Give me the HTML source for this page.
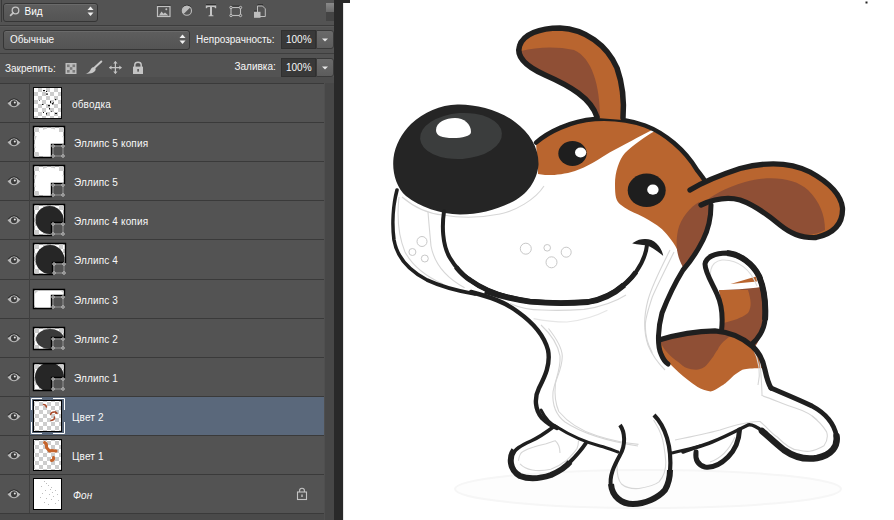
<!DOCTYPE html>
<html><head><meta charset="utf-8">
<style>
*{margin:0;padding:0;box-sizing:border-box}
html,body{width:894px;height:520px;overflow:hidden;background:#fff;font-family:"Liberation Sans",sans-serif}
#panel{position:absolute;left:0;top:0;width:334px;height:520px;background:#535353}
#strip{position:absolute;left:334px;top:0;width:9px;height:520px;background:#292929}
#canvas{position:absolute;left:343px;top:0;width:551px;height:520px;background:#fff}
.abs{position:absolute}
.txt{position:absolute;font-size:10px;color:#f8f8f8;white-space:nowrap;line-height:12px}
.dd{position:absolute;border-radius:3px;background:linear-gradient(#5e5e5e,#545454);border:1px solid #353535;box-shadow:inset 0 1px 0 #6a6a6a}
.inp{position:absolute;background:#393939;border:1px solid #303030}
.btn{position:absolute;background:linear-gradient(#6a6a6a,#5c5c5c);border:1px solid #3a3a3a;border-radius:0 3px 3px 0}
.thumb{position:absolute;border:1px solid #0a0a0a;background-color:#fff;
 background-image:linear-gradient(45deg,#cdcdcd 25%,transparent 25%,transparent 75%,#cdcdcd 75%),linear-gradient(45deg,#cdcdcd 25%,transparent 25%,transparent 75%,#cdcdcd 75%);
 background-size:8px 8px;background-position:0 0,4px 4px}

</style></head><body>
<div id="panel">
<div class="abs" style="left:0;top:83px;width:324px;height:39px;background:#535353;border-top:1px solid #3a3a3a"></div>
<div class="abs" style="left:29px;top:83px;width:1px;height:39px;background:#3f3f3f"></div>
<svg class="abs" style="left:6px;top:96px" width="16" height="14" viewBox="0 0 16 14">
<path d="M1.6 7.2 Q8 -1.2 14.4 7.2 Q8 15.4 1.6 7.2Z" fill="#b8b8b8"/>
<path d="M2.2 6.2 Q8 -0.6 13.8 6.2" fill="none" stroke="#2a2a2a" stroke-width="1.1"/>
<circle cx="8" cy="7.3" r="3" fill="#3a3a3a"/><circle cx="8.8" cy="6.4" r="1" fill="#e8e8e8"/></svg>
<div class="txt" style="left:72px;top:99px;letter-spacing:0.15px;">обводка</div>
<div class="abs" style="left:0;top:122px;width:324px;height:39px;background:#535353;border-top:1px solid #3a3a3a"></div>
<div class="abs" style="left:29px;top:122px;width:1px;height:39px;background:#3f3f3f"></div>
<svg class="abs" style="left:6px;top:135px" width="16" height="14" viewBox="0 0 16 14">
<path d="M1.6 7.2 Q8 -1.2 14.4 7.2 Q8 15.4 1.6 7.2Z" fill="#b8b8b8"/>
<path d="M2.2 6.2 Q8 -0.6 13.8 6.2" fill="none" stroke="#2a2a2a" stroke-width="1.1"/>
<circle cx="8" cy="7.3" r="3" fill="#3a3a3a"/><circle cx="8.8" cy="6.4" r="1" fill="#e8e8e8"/></svg>
<div class="txt" style="left:74px;top:138px;letter-spacing:0.15px;">Эллипс 5 копия</div>
<div class="abs" style="left:0;top:161px;width:324px;height:39px;background:#535353;border-top:1px solid #3a3a3a"></div>
<div class="abs" style="left:29px;top:161px;width:1px;height:39px;background:#3f3f3f"></div>
<svg class="abs" style="left:6px;top:174px" width="16" height="14" viewBox="0 0 16 14">
<path d="M1.6 7.2 Q8 -1.2 14.4 7.2 Q8 15.4 1.6 7.2Z" fill="#b8b8b8"/>
<path d="M2.2 6.2 Q8 -0.6 13.8 6.2" fill="none" stroke="#2a2a2a" stroke-width="1.1"/>
<circle cx="8" cy="7.3" r="3" fill="#3a3a3a"/><circle cx="8.8" cy="6.4" r="1" fill="#e8e8e8"/></svg>
<div class="txt" style="left:74px;top:177px;letter-spacing:0.15px;">Эллипс 5</div>
<div class="abs" style="left:0;top:200px;width:324px;height:39px;background:#535353;border-top:1px solid #3a3a3a"></div>
<div class="abs" style="left:29px;top:200px;width:1px;height:39px;background:#3f3f3f"></div>
<svg class="abs" style="left:6px;top:213px" width="16" height="14" viewBox="0 0 16 14">
<path d="M1.6 7.2 Q8 -1.2 14.4 7.2 Q8 15.4 1.6 7.2Z" fill="#b8b8b8"/>
<path d="M2.2 6.2 Q8 -0.6 13.8 6.2" fill="none" stroke="#2a2a2a" stroke-width="1.1"/>
<circle cx="8" cy="7.3" r="3" fill="#3a3a3a"/><circle cx="8.8" cy="6.4" r="1" fill="#e8e8e8"/></svg>
<div class="txt" style="left:74px;top:216px;letter-spacing:0.15px;">Эллипс 4 копия</div>
<div class="abs" style="left:0;top:239px;width:324px;height:40px;background:#535353;border-top:1px solid #3a3a3a"></div>
<div class="abs" style="left:29px;top:239px;width:1px;height:40px;background:#3f3f3f"></div>
<svg class="abs" style="left:6px;top:253px" width="16" height="14" viewBox="0 0 16 14">
<path d="M1.6 7.2 Q8 -1.2 14.4 7.2 Q8 15.4 1.6 7.2Z" fill="#b8b8b8"/>
<path d="M2.2 6.2 Q8 -0.6 13.8 6.2" fill="none" stroke="#2a2a2a" stroke-width="1.1"/>
<circle cx="8" cy="7.3" r="3" fill="#3a3a3a"/><circle cx="8.8" cy="6.4" r="1" fill="#e8e8e8"/></svg>
<div class="txt" style="left:74px;top:255px;letter-spacing:0.15px;">Эллипс 4</div>
<div class="abs" style="left:0;top:279px;width:324px;height:39px;background:#535353;border-top:1px solid #3a3a3a"></div>
<div class="abs" style="left:29px;top:279px;width:1px;height:39px;background:#3f3f3f"></div>
<svg class="abs" style="left:6px;top:292px" width="16" height="14" viewBox="0 0 16 14">
<path d="M1.6 7.2 Q8 -1.2 14.4 7.2 Q8 15.4 1.6 7.2Z" fill="#b8b8b8"/>
<path d="M2.2 6.2 Q8 -0.6 13.8 6.2" fill="none" stroke="#2a2a2a" stroke-width="1.1"/>
<circle cx="8" cy="7.3" r="3" fill="#3a3a3a"/><circle cx="8.8" cy="6.4" r="1" fill="#e8e8e8"/></svg>
<div class="txt" style="left:74px;top:295px;letter-spacing:0.15px;">Эллипс 3</div>
<div class="abs" style="left:0;top:318px;width:324px;height:39px;background:#535353;border-top:1px solid #3a3a3a"></div>
<div class="abs" style="left:29px;top:318px;width:1px;height:39px;background:#3f3f3f"></div>
<svg class="abs" style="left:6px;top:331px" width="16" height="14" viewBox="0 0 16 14">
<path d="M1.6 7.2 Q8 -1.2 14.4 7.2 Q8 15.4 1.6 7.2Z" fill="#b8b8b8"/>
<path d="M2.2 6.2 Q8 -0.6 13.8 6.2" fill="none" stroke="#2a2a2a" stroke-width="1.1"/>
<circle cx="8" cy="7.3" r="3" fill="#3a3a3a"/><circle cx="8.8" cy="6.4" r="1" fill="#e8e8e8"/></svg>
<div class="txt" style="left:74px;top:334px;letter-spacing:0.15px;">Эллипс 2</div>
<div class="abs" style="left:0;top:357px;width:324px;height:39px;background:#535353;border-top:1px solid #3a3a3a"></div>
<div class="abs" style="left:29px;top:357px;width:1px;height:39px;background:#3f3f3f"></div>
<svg class="abs" style="left:6px;top:370px" width="16" height="14" viewBox="0 0 16 14">
<path d="M1.6 7.2 Q8 -1.2 14.4 7.2 Q8 15.4 1.6 7.2Z" fill="#b8b8b8"/>
<path d="M2.2 6.2 Q8 -0.6 13.8 6.2" fill="none" stroke="#2a2a2a" stroke-width="1.1"/>
<circle cx="8" cy="7.3" r="3" fill="#3a3a3a"/><circle cx="8.8" cy="6.4" r="1" fill="#e8e8e8"/></svg>
<div class="txt" style="left:74px;top:373px;letter-spacing:0.15px;">Эллипс 1</div>
<div class="abs" style="left:0;top:396px;width:324px;height:39px;background:#535353;border-top:1px solid #3a3a3a"></div>
<div class="abs" style="left:30px;top:397px;width:294px;height:38px;background:#5a687b"></div>
<div class="abs" style="left:29px;top:396px;width:1px;height:39px;background:#3f3f3f"></div>
<svg class="abs" style="left:6px;top:409px" width="16" height="14" viewBox="0 0 16 14">
<path d="M1.6 7.2 Q8 -1.2 14.4 7.2 Q8 15.4 1.6 7.2Z" fill="#b8b8b8"/>
<path d="M2.2 6.2 Q8 -0.6 13.8 6.2" fill="none" stroke="#2a2a2a" stroke-width="1.1"/>
<circle cx="8" cy="7.3" r="3" fill="#3a3a3a"/><circle cx="8.8" cy="6.4" r="1" fill="#e8e8e8"/></svg>
<div class="txt" style="left:72px;top:412px;letter-spacing:0.15px;">Цвет 2</div>
<div class="abs" style="left:0;top:435px;width:324px;height:39px;background:#535353;border-top:1px solid #3a3a3a"></div>
<div class="abs" style="left:29px;top:435px;width:1px;height:39px;background:#3f3f3f"></div>
<svg class="abs" style="left:6px;top:448px" width="16" height="14" viewBox="0 0 16 14">
<path d="M1.6 7.2 Q8 -1.2 14.4 7.2 Q8 15.4 1.6 7.2Z" fill="#b8b8b8"/>
<path d="M2.2 6.2 Q8 -0.6 13.8 6.2" fill="none" stroke="#2a2a2a" stroke-width="1.1"/>
<circle cx="8" cy="7.3" r="3" fill="#3a3a3a"/><circle cx="8.8" cy="6.4" r="1" fill="#e8e8e8"/></svg>
<div class="txt" style="left:72px;top:451px;letter-spacing:0.15px;">Цвет 1</div>
<div class="abs" style="left:0;top:474px;width:324px;height:39px;background:#535353;border-top:1px solid #3a3a3a"></div>
<div class="abs" style="left:29px;top:474px;width:1px;height:39px;background:#3f3f3f"></div>
<svg class="abs" style="left:6px;top:487px" width="16" height="14" viewBox="0 0 16 14">
<path d="M1.6 7.2 Q8 -1.2 14.4 7.2 Q8 15.4 1.6 7.2Z" fill="#b8b8b8"/>
<path d="M2.2 6.2 Q8 -0.6 13.8 6.2" fill="none" stroke="#2a2a2a" stroke-width="1.1"/>
<circle cx="8" cy="7.3" r="3" fill="#3a3a3a"/><circle cx="8.8" cy="6.4" r="1" fill="#e8e8e8"/></svg>
<div class="txt" style="left:73px;top:490px;letter-spacing:0.15px;font-style:italic;">Фон</div>
<div class="abs" style="left:0;top:513px;width:324px;height:1px;background:#3a3a3a"></div>
<div class="thumb" style="left:33px;top:87px;width:29px;height:32px"></div>
<svg class="abs" style="left:31px;top:124px" width="36" height="38" viewBox="0 0 36 38"><defs><pattern id="ck1" width="8" height="8" patternUnits="userSpaceOnUse"><rect width="8" height="8" fill="#fff"/><rect width="4" height="4" fill="#cdcdcd"/><rect x="4" y="4" width="4" height="4" fill="#cdcdcd"/></pattern><clipPath id="cl1"><path d="M2.5,2.5 L33.5,2.5 L33.5,20.5 L20.5,20.5 L20.5,33.5 L2.5,33.5 Z"/></clipPath></defs><g clip-path="url(#cl1)"><rect width="36" height="36" fill="url(#ck1)"/><ellipse cx="18.5" cy="19" rx="14.5" ry="14.5" fill="#fff"/></g><path d="M2.5,2.5 L33.5,2.5 L33.5,20.5 L20.5,20.5 L20.5,33.5 L2.5,33.5 Z" fill="none" stroke="#000" stroke-width="1.4"/><rect x="22" y="22" width="10" height="10" fill="none" stroke="#9c9c9c" stroke-width="0.9"/><circle cx="22" cy="22" r="1.25" fill="#4a4a4a" stroke="#d4d4d4" stroke-width="0.9"/><circle cx="32" cy="22" r="1.25" fill="#4a4a4a" stroke="#d4d4d4" stroke-width="0.9"/><circle cx="22" cy="32" r="1.25" fill="#4a4a4a" stroke="#d4d4d4" stroke-width="0.9"/><circle cx="32" cy="32" r="1.25" fill="#4a4a4a" stroke="#d4d4d4" stroke-width="0.9"/></svg>
<svg class="abs" style="left:31px;top:163px" width="36" height="38" viewBox="0 0 36 38"><defs><pattern id="ck2" width="8" height="8" patternUnits="userSpaceOnUse"><rect width="8" height="8" fill="#fff"/><rect width="4" height="4" fill="#cdcdcd"/><rect x="4" y="4" width="4" height="4" fill="#cdcdcd"/></pattern><clipPath id="cl2"><path d="M2.5,2.5 L33.5,2.5 L33.5,20.5 L20.5,20.5 L20.5,33.5 L2.5,33.5 Z"/></clipPath></defs><g clip-path="url(#cl2)"><rect width="36" height="36" fill="url(#ck2)"/><ellipse cx="18.5" cy="19" rx="14.5" ry="14.5" fill="#fff"/></g><path d="M2.5,2.5 L33.5,2.5 L33.5,20.5 L20.5,20.5 L20.5,33.5 L2.5,33.5 Z" fill="none" stroke="#000" stroke-width="1.4"/><rect x="22" y="22" width="10" height="10" fill="none" stroke="#9c9c9c" stroke-width="0.9"/><circle cx="22" cy="22" r="1.25" fill="#4a4a4a" stroke="#d4d4d4" stroke-width="0.9"/><circle cx="32" cy="22" r="1.25" fill="#4a4a4a" stroke="#d4d4d4" stroke-width="0.9"/><circle cx="22" cy="32" r="1.25" fill="#4a4a4a" stroke="#d4d4d4" stroke-width="0.9"/><circle cx="32" cy="32" r="1.25" fill="#4a4a4a" stroke="#d4d4d4" stroke-width="0.9"/></svg>
<svg class="abs" style="left:31px;top:202px" width="36" height="38" viewBox="0 0 36 38"><defs><pattern id="ck3" width="8" height="8" patternUnits="userSpaceOnUse"><rect width="8" height="8" fill="#fff"/><rect width="4" height="4" fill="#cdcdcd"/><rect x="4" y="4" width="4" height="4" fill="#cdcdcd"/></pattern><clipPath id="cl3"><path d="M2.5,2.5 L33.5,2.5 L33.5,20.5 L20.5,20.5 L20.5,33.5 L2.5,33.5 Z"/></clipPath></defs><g clip-path="url(#cl3)"><rect width="36" height="36" fill="url(#ck3)"/><ellipse cx="18.5" cy="18" rx="14" ry="14" fill="#262626"/></g><path d="M2.5,2.5 L33.5,2.5 L33.5,20.5 L20.5,20.5 L20.5,33.5 L2.5,33.5 Z" fill="none" stroke="#000" stroke-width="1.4"/><rect x="22" y="22" width="10" height="10" fill="none" stroke="#9c9c9c" stroke-width="0.9"/><circle cx="22" cy="22" r="1.25" fill="#4a4a4a" stroke="#d4d4d4" stroke-width="0.9"/><circle cx="32" cy="22" r="1.25" fill="#4a4a4a" stroke="#d4d4d4" stroke-width="0.9"/><circle cx="22" cy="32" r="1.25" fill="#4a4a4a" stroke="#d4d4d4" stroke-width="0.9"/><circle cx="32" cy="32" r="1.25" fill="#4a4a4a" stroke="#d4d4d4" stroke-width="0.9"/></svg>
<svg class="abs" style="left:31px;top:241px" width="37" height="38" viewBox="0 0 37 38"><defs><pattern id="ck4" width="8" height="8" patternUnits="userSpaceOnUse"><rect width="8" height="8" fill="#fff"/><rect width="4" height="4" fill="#cdcdcd"/><rect x="4" y="4" width="4" height="4" fill="#cdcdcd"/></pattern><clipPath id="cl4"><path d="M2.5,2.5 L34.5,2.5 L34.5,21.5 L21.5,21.5 L21.5,33.5 L2.5,33.5 Z"/></clipPath></defs><g clip-path="url(#cl4)"><rect width="37" height="36" fill="url(#ck4)"/><ellipse cx="19" cy="18.5" rx="14.5" ry="14.5" fill="#262626"/></g><path d="M2.5,2.5 L34.5,2.5 L34.5,21.5 L21.5,21.5 L21.5,33.5 L2.5,33.5 Z" fill="none" stroke="#000" stroke-width="1.4"/><rect x="23" y="23" width="10" height="9" fill="none" stroke="#9c9c9c" stroke-width="0.9"/><circle cx="23" cy="23" r="1.25" fill="#4a4a4a" stroke="#d4d4d4" stroke-width="0.9"/><circle cx="33" cy="23" r="1.25" fill="#4a4a4a" stroke="#d4d4d4" stroke-width="0.9"/><circle cx="23" cy="32" r="1.25" fill="#4a4a4a" stroke="#d4d4d4" stroke-width="0.9"/><circle cx="33" cy="32" r="1.25" fill="#4a4a4a" stroke="#d4d4d4" stroke-width="0.9"/></svg>
<svg class="abs" style="left:31px;top:287px" width="36" height="26" viewBox="0 0 36 26"><defs><pattern id="ck5" width="8" height="8" patternUnits="userSpaceOnUse"><rect width="8" height="8" fill="#fff"/><rect width="4" height="4" fill="#cdcdcd"/><rect x="4" y="4" width="4" height="4" fill="#cdcdcd"/></pattern><clipPath id="cl5"><path d="M2.5,2.5 L33.5,2.5 L33.5,8.5 L20.5,8.5 L20.5,21.5 L2.5,21.5 Z"/></clipPath></defs><g clip-path="url(#cl5)"><rect width="36" height="24" fill="url(#ck5)"/><ellipse cx="18.5" cy="13" rx="17" ry="12" fill="#fff"/></g><path d="M2.5,2.5 L33.5,2.5 L33.5,8.5 L20.5,8.5 L20.5,21.5 L2.5,21.5 Z" fill="none" stroke="#000" stroke-width="1.4"/><rect x="22" y="10" width="10" height="10" fill="none" stroke="#9c9c9c" stroke-width="0.9"/><circle cx="22" cy="10" r="1.25" fill="#4a4a4a" stroke="#d4d4d4" stroke-width="0.9"/><circle cx="32" cy="10" r="1.25" fill="#4a4a4a" stroke="#d4d4d4" stroke-width="0.9"/><circle cx="22" cy="20" r="1.25" fill="#4a4a4a" stroke="#d4d4d4" stroke-width="0.9"/><circle cx="32" cy="20" r="1.25" fill="#4a4a4a" stroke="#d4d4d4" stroke-width="0.9"/></svg>
<svg class="abs" style="left:31px;top:325px" width="36" height="29" viewBox="0 0 36 29"><defs><pattern id="ck6" width="8" height="8" patternUnits="userSpaceOnUse"><rect width="8" height="8" fill="#fff"/><rect width="4" height="4" fill="#cdcdcd"/><rect x="4" y="4" width="4" height="4" fill="#cdcdcd"/></pattern><clipPath id="cl6"><path d="M2.5,2.5 L33.5,2.5 L33.5,12.5 L20.5,12.5 L20.5,24.5 L2.5,24.5 Z"/></clipPath></defs><g clip-path="url(#cl6)"><rect width="36" height="27" fill="url(#ck6)"/><ellipse cx="19" cy="14" rx="14" ry="10" fill="#3a3a3a"/></g><path d="M2.5,2.5 L33.5,2.5 L33.5,12.5 L20.5,12.5 L20.5,24.5 L2.5,24.5 Z" fill="none" stroke="#000" stroke-width="1.4"/><rect x="22" y="14" width="10" height="9" fill="none" stroke="#9c9c9c" stroke-width="0.9"/><circle cx="22" cy="14" r="1.25" fill="#4a4a4a" stroke="#d4d4d4" stroke-width="0.9"/><circle cx="32" cy="14" r="1.25" fill="#4a4a4a" stroke="#d4d4d4" stroke-width="0.9"/><circle cx="22" cy="23" r="1.25" fill="#4a4a4a" stroke="#d4d4d4" stroke-width="0.9"/><circle cx="32" cy="23" r="1.25" fill="#4a4a4a" stroke="#d4d4d4" stroke-width="0.9"/></svg>
<svg class="abs" style="left:31px;top:361px" width="36" height="34" viewBox="0 0 36 34"><defs><pattern id="ck7" width="8" height="8" patternUnits="userSpaceOnUse"><rect width="8" height="8" fill="#fff"/><rect width="4" height="4" fill="#cdcdcd"/><rect x="4" y="4" width="4" height="4" fill="#cdcdcd"/></pattern><clipPath id="cl7"><path d="M2.5,2.5 L33.5,2.5 L33.5,16.5 L20.5,16.5 L20.5,29.5 L2.5,29.5 Z"/></clipPath></defs><g clip-path="url(#cl7)"><rect width="36" height="32" fill="url(#ck7)"/><ellipse cx="18.5" cy="16" rx="14.5" ry="14.5" fill="#262626"/></g><path d="M2.5,2.5 L33.5,2.5 L33.5,16.5 L20.5,16.5 L20.5,29.5 L2.5,29.5 Z" fill="none" stroke="#000" stroke-width="1.4"/><rect x="22" y="18" width="10" height="10" fill="none" stroke="#9c9c9c" stroke-width="0.9"/><circle cx="22" cy="18" r="1.25" fill="#4a4a4a" stroke="#d4d4d4" stroke-width="0.9"/><circle cx="32" cy="18" r="1.25" fill="#4a4a4a" stroke="#d4d4d4" stroke-width="0.9"/><circle cx="22" cy="28" r="1.25" fill="#4a4a4a" stroke="#d4d4d4" stroke-width="0.9"/><circle cx="32" cy="28" r="1.25" fill="#4a4a4a" stroke="#d4d4d4" stroke-width="0.9"/></svg>
<svg class="abs" style="left:33px;top:87px" width="29" height="32" viewBox="33 87 29 32" fill="#111"><rect x="43" y="90" width="2" height="1.2"/><rect x="46" y="91" width="1" height="1"/><rect x="46" y="93.5" width="2" height="1.2"/><rect x="55" y="99" width="1.2" height="1.2"/><rect x="50" y="101" width="1" height="2"/><rect x="52" y="103" width="1.5" height="1.5"/><rect x="48" y="105" width="2" height="1.2"/><rect x="42" y="104" width="1.5" height="1"/><rect x="49" y="108" width="1" height="1.5"/><rect x="43" y="112" width="1" height="1"/><rect x="46" y="113" width="1" height="1.5"/><rect x="55" y="113" width="2" height="1"/><rect x="53" y="102" width="1" height="1" fill="#555"/><rect x="39" y="100" width="1" height="1" fill="#777"/><rect x="51" y="111" width="1" height="1" fill="#555"/></svg>
<div class="thumb" style="left:33px;top:400px;width:29px;height:32px;border-width:1.5px;border-color:#000;background-position:1px 1px,5px 5px"></div>
<svg class="abs" style="left:30px;top:397px" width="36" height="39" viewBox="30 397 36 39"><path d="M31.5 410 V398.5 H42 M53 398.5 H64.5 V410 M64.5 422 V433.5 H53 M42 433.5 H31.5 V422" fill="none" stroke="#fff" stroke-width="1"/><g fill="none" stroke="#a8492a" stroke-width="1.5" stroke-linecap="round"><path d="M43.5 404.5 Q46 404.5 46.5 407"/><path d="M50.5 414.5 Q51.5 411.5 55 412 L57 413.5"/><path d="M54.5 417 Q55 420 51 420.5"/></g><path d="M55 411 L57.5 412.5 L55.5 414Z" fill="#a8492a"/></svg>
<div class="thumb" style="left:33px;top:439px;width:29px;height:32px;border-width:1.5px;border-color:#000;background-position:1px 1px,5px 5px"></div>
<svg class="abs" style="left:33px;top:439px" width="29" height="32" viewBox="33 439 29 32"><g fill="none" stroke="#c5642c" stroke-width="3" stroke-linecap="round" stroke-linejoin="round"><path d="M44.5 442.5 Q47 443.5 46.5 447.5 L49.5 451 L52 450.5 L56 451"/><path d="M53.5 457.5 Q54 460 51.5 460.5"/></g></svg>
<div class="abs" style="left:33px;top:478px;width:29px;height:32px;border:1.5px solid #000;background:#fff"></div>
<svg class="abs" style="left:34px;top:479px" width="27" height="30" viewBox="34 479 27 30" fill="#9a9a9a"><rect x="44" y="481" width="0.8" height="0.8"/><rect x="46" y="483" width="0.8" height="0.8"/><rect x="41" y="486" width="0.8" height="0.8"/><rect x="48" y="485" width="0.8" height="0.8"/><rect x="51" y="487" width="0.8" height="0.8"/><rect x="55" y="490" width="0.8" height="0.8"/><rect x="45" y="490" width="0.8" height="0.8"/><rect x="42" y="493" width="0.8" height="0.8"/><rect x="49" y="494" width="0.8" height="0.8"/><rect x="53" y="496" width="0.8" height="0.8"/><rect x="57" y="494" width="0.8" height="0.8"/><rect x="46" y="498" width="0.8" height="0.8"/><rect x="51" y="499" width="0.8" height="0.8"/><rect x="44" y="502" width="0.8" height="0.8"/><rect x="48" y="504" width="0.8" height="0.8"/><rect x="55" y="503" width="0.8" height="0.8"/><rect x="52" y="492" width="0.8" height="0.8"/><rect x="40" y="497" width="0.8" height="0.8"/><rect x="58" y="500" width="0.8" height="0.8"/><rect x="50" y="489" width="0.8" height="0.8"/></svg>
<svg class="abs" style="left:294px;top:484px" width="16" height="18" viewBox="0 0 16 18"><path d="M5.6 8 V6.6 Q5.6 4.3 8 4.3 Q10.4 4.3 10.4 6.6 V8" fill="none" stroke="#c4c4c4" stroke-width="1.1"/><rect x="3.5" y="8" width="9" height="7.5" fill="none" stroke="#c4c4c4" stroke-width="1.1"/><rect x="7.3" y="10.5" width="1.4" height="2.5" fill="#c4c4c4"/></svg>
  <div class="abs" style="left:1px;top:0;width:1px;height:22px;background:#3a3a3a"></div>
  <div class="dd" style="left:3px;top:3px;width:95px;height:19px"></div>
  <svg class="abs" style="left:8px;top:4px" width="14" height="15" viewBox="0 0 14 15"><circle cx="7.5" cy="6.5" r="3.3" fill="none" stroke="#c4c4c4" stroke-width="1.3"/><line x1="5.2" y1="8.8" x2="2.6" y2="11.4" stroke="#c4c4c4" stroke-width="1.8" stroke-linecap="round"/></svg>
  <div class="txt" style="left:24.5px;top:5.5px;font-size:10px;color:#fff">Вид</div>
  <svg class="abs" style="left:86px;top:5px" width="10" height="14" viewBox="0 0 10 14"><path d="M4.5 1.5 L7.5 5 L1.5 5Z" fill="#f0f0f0"/><path d="M1.5 7.5 L7.5 7.5 L4.5 11Z" fill="#f0f0f0"/></svg>
  <!-- header icons -->
  <svg class="abs" style="left:150px;top:0" width="130" height="24" viewBox="150 0 130 24">
    <g stroke="#2e2e2e" stroke-width="1" fill="none"><path d="M157 5.3 H170.5"/><path d="M183 7.2 A5 5 0 0 1 191 7.2"/><path d="M206 4.6 H216"/><path d="M231 6.1 H240.5"/><path d="M257.5 4.7 H263"/><path d="M254 11 H257"/></g>
    <rect x="157.5" y="6.5" width="12.5" height="10" fill="none" stroke="#c0c0c0" stroke-width="1.2"/>
    <path d="M159 15.5 L161.5 11.5 L163.5 13.8 L165 12.5 L168.5 15.5Z" fill="#c0c0c0"/>
    <circle cx="166.3" cy="9.3" r="1" fill="#c0c0c0"/>
    <circle cx="186.9" cy="10.7" r="4.6" fill="#555" stroke="#bdbdbd" stroke-width="1.1"/>
    <path d="M183.6 14 A4.6 4.6 0 0 1 190.2 7.4Z" fill="#bdbdbd"/>
    <path d="M205.8 5.5 H216.2 V8.2 H215.3 Q214.8 6.9 213.2 6.9 H212 V14.6 Q212 15.4 213.5 15.5 V16.2 H208.5 V15.5 Q210 15.4 210 14.6 V6.9 H208.8 Q207.2 6.9 206.7 8.2 H205.8Z" fill="#c4c4c4"/>
    <rect x="231" y="7.5" width="9.5" height="8" fill="none" stroke="#bdbdbd" stroke-width="1.1"/>
    <circle cx="231" cy="7.5" r="1.2" fill="#555" stroke="#c8c8c8" stroke-width="0.9"/>
    <circle cx="240.5" cy="7.5" r="1.2" fill="#555" stroke="#c8c8c8" stroke-width="0.9"/>
    <circle cx="231" cy="15.5" r="1.2" fill="#555" stroke="#c8c8c8" stroke-width="0.9"/>
    <circle cx="240.5" cy="15.5" r="1.2" fill="#555" stroke="#c8c8c8" stroke-width="0.9"/>
    <path d="M257.5 6 H262.5 L265.3 8.8 V16.5 H257.5Z" fill="none" stroke="#bdbdbd" stroke-width="1"/>
    <rect x="254" y="11.8" width="6.5" height="6" fill="#bdbdbd"/>
  </svg>
  <div class="abs" style="left:326px;top:3px;width:8px;height:9px;background:linear-gradient(#8a8a8a,#6a6a6a)"></div>
  <div class="abs" style="left:326px;top:12px;width:8px;height:9px;background:#444"></div>
  <div class="abs" style="left:0;top:25px;width:334px;height:1px;background:#3c3c3c"></div><div class="abs" style="left:0;top:26px;width:334px;height:1px;background:#5a5a5a"></div>
  <div class="dd" style="left:3px;top:30px;width:187px;height:20px"></div>
  <div class="txt" style="left:10px;top:34px">Обычные</div>
  <svg class="abs" style="left:178px;top:33px" width="10" height="14" viewBox="0 0 10 14"><path d="M4.5 1.5 L7.5 5 L1.5 5Z" fill="#f0f0f0"/><path d="M1.5 7.5 L7.5 7.5 L4.5 11Z" fill="#f0f0f0"/></svg>
  <div class="txt" style="left:196px;top:34px">Непрозрачность:</div>
  <div class="inp" style="left:281px;top:30px;width:35px;height:19px"></div>
  <div class="txt" style="left:286px;top:34px">100%</div>
  <div class="btn" style="left:316px;top:30px;width:18px;height:19px"></div>
  <svg class="abs" style="left:320px;top:36px" width="10" height="8" viewBox="0 0 10 8"><path d="M2 2.5 H8 L5 5.5Z" fill="#e8e8e8"/></svg>
  <div class="abs" style="left:0;top:53px;width:334px;height:1px;background:#3e3e3e"></div>
  <div class="txt" style="left:5px;top:63px">Закрепить:</div>
  <svg class="abs" style="left:60px;top:58px" width="90" height="22" viewBox="60 58 90 22">
    <rect x="65.5" y="63" width="11" height="11" fill="#bdbdbd"/>
    <rect x="67" y="64.5" width="2.6" height="2.6" fill="#7a7a7a"/><rect x="72.5" y="64.5" width="2.6" height="2.6" fill="#7a7a7a"/>
    <rect x="69.8" y="67.2" width="2.6" height="2.6" fill="#7a7a7a"/>
    <rect x="67" y="70" width="2.6" height="2.6" fill="#7a7a7a"/><rect x="72.5" y="70" width="2.6" height="2.6" fill="#7a7a7a"/>
    <line x1="94.5" y1="67.8" x2="101.3" y2="61.5" stroke="#c8c8c8" stroke-width="2" stroke-linecap="round"/>
    <path d="M85.5 73.6 C88.5 73.4 90 71.2 91 69 C92 66.8 94.6 66.6 95.6 68.8 C96.2 71.4 92.5 74.4 85.5 73.6Z" fill="#c8c8c8"/>
    <path d="M115.4 61.5 V73.5 M109.4 67.6 H121.4" stroke="#c4c4c4" stroke-width="1.2"/>
    <path d="M115.4 61 L113.2 63.5 H117.6Z M115.4 74 L113.2 71.6 H117.6Z M109 67.6 L111.5 65.4 V69.8Z M121.8 67.6 L119.3 65.4 V69.8Z" fill="#c4c4c4"/>
    <path d="M134.8 67 V64.8 Q134.8 62.2 138 62.2 Q141.2 62.2 141.2 64.8 V67" fill="none" stroke="#c4c4c4" stroke-width="1.5"/>
    <rect x="133" y="66.6" width="10" height="7.4" fill="#c4c4c4"/>
    <rect x="137.4" y="69" width="1.4" height="2.6" fill="#444"/>
  </svg>
  <div class="txt" style="left:234.5px;top:61px">Заливка:</div>
  <div class="inp" style="left:281px;top:58px;width:35px;height:19px"></div>
  <div class="txt" style="left:286px;top:62px">100%</div>
  <div class="btn" style="left:316px;top:58px;width:18px;height:19px"></div>
  <svg class="abs" style="left:320px;top:64px" width="10" height="8" viewBox="0 0 10 8"><path d="M2 2.5 H8 L5 5.5Z" fill="#e8e8e8"/></svg>
  <div class="abs" style="left:0;top:77px;width:334px;height:6px;background:#4d4d4d"></div>
  <div class="abs" style="left:324px;top:83px;width:10px;height:437px;background:#474747;border-left:1px solid #4f4f4f"></div>
  <div class="abs" style="left:0;top:514px;width:324px;height:6px;background:#4a4a4a"></div>

</div>
<div id="strip"></div>
<div id="canvas"><svg style="position:absolute;left:-343px;top:0" width="894" height="520" viewBox="0 0 894 520">
<rect x="865.5" y="1.5" width="2" height="2" fill="#222"/>
<!-- shadow -->
<ellipse cx="648" cy="489" rx="193" ry="19" fill="#fdfdfd" stroke="#f6f6f6" stroke-width="2"/>
<!-- head patches -->
<path d="M536,142.6 C548,132 570,121 595,119 C612,118 630,120 645,125.5 L654,129 C640,136 622,146 610,152.3 C598,160 587,167 575,171 C564,174.5 552,175.5 545,175 L538,174 Z" fill="#b9652f"/>
<path d="M655,131 C646,136 632,146 625,153 C619,160 615,172 615,184 C615,197 616,200 620,204.3 C626,209 632,212 638.3,214.4 C646,218 652,222 657,225.3 C664,230 670,238 675,245.4 C679,252 681,259 683,268 L686,268 C692,260 699,250 703,240 C708,230 711,218 711,205 L706,182 C698,168 690,158 680,148 C672,141 664,136 655,132 Z" fill="#b9652f"/>
<path d="M699,202 C690,207 681,218 678,230 C675,245 677,257 683,267 L686,268 C692,260 699,250 703,240 C708,230 711,218 711,205 Z" fill="#8f4f35"/>
<!-- tail fill -->
<path d="M719,290 C730,290 748,289 761,287 C765,298 765,305 765,315 C765,325 761,338 755,347 C745,338 730,333 722,331 C723,318 722,302 719,290 Z" fill="#8f4f35"/>
<path d="M719,290 C730,290 740,290 748,290 C751,300 752,307 748,313 C742,318 732,321 723,323 C723,310 722,300 719,290 Z" fill="#b9652f"/>
<path d="M730.5,284 L756,276.5 L757,281.5 Z" fill="#b9652f"/>
<!-- hind patch -->
<path d="M659,340 C675,335 695,331 715,330.8 C730,332 743,338 752,346 C759,352 763,360 765,368 L760,368.3 C752,368 745,369 742.4,369.7 C738,372 736,374 733.7,375.5 C728,381 725,384 722,385.6 C717,389 714,391 710.6,391.4 C706,391 701,389 697.6,387 C690,382 684,377 678.9,372.6 C672,366 666,360 661.5,353.9 C659,349 659,345 659,340 Z" fill="#b9652f"/>
<path d="M659,340 C675,335 695,331 715,330.8 C722,331 728,332 733,334 C726,339 720,344 717.8,349.5 C715,353 714,356 712,358.2 C709,362 707,365 704.8,366.8 C701,369 699,369.7 696.2,369.7 C692,369.5 690,369 687.5,368.3 C684,367 681,364.5 678.9,362.5 C674,359 670,356 667.3,352.4 C664,349 662,346 661.5,343.8 Z" fill="#8f4f35"/>
<!-- nose -->
<path d="M457.5,104.5 C475,104 500,110 515,122 C530,133 539,148 538.5,165 C537,180 528,195 510,203 C495,210 478,214.5 460,214.5 C440,214 420,207 406,196 C396,187 392,172 393.5,158 C395,145 402,133 411,124 C424,112 440,105 457.5,104.5 Z" fill="#252525"/>
<ellipse cx="461" cy="136" rx="41" ry="23" fill="#3b3d3d" transform="rotate(-4 461 136)"/>
<path d="M436,130 C436,122 446,118 455,118 C464,118 471,124 471,132 C471,136 462,138 453,138 C442,138 436,136 436,130 Z" fill="#fff"/>
<!-- eyes -->
<ellipse cx="572.5" cy="153.5" rx="14.2" ry="12.4" fill="#1e1e1e"/>
<ellipse cx="580.6" cy="152.5" rx="5.6" ry="4.9" fill="#fff"/>
<ellipse cx="646.7" cy="190.3" rx="19" ry="16.8" fill="#1e1e1e"/>
<ellipse cx="652.9" cy="189.7" rx="5.7" ry="5.1" fill="#fff"/>
<!-- sketch lines -->
<g fill="none" stroke="#d6d6d6" stroke-width="1.1">
<path d="M402,197 C415,208 430,214 443,215 C460,218 480,218 500,214 C515,211 535,200 544,186"/>
<path d="M428,212 C429,225 430,235 431,246 C434,262 443,276 464.6,287.8"/>
<path d="M399,197 C397,215 398,235 405,252 C412,265 425,276 443,284"/>
<path d="M510,303.5 C520,308 532,310 542,310 C560,311 575,310 584,309.4 C600,307 615,302 626,295"/><path d="M533.6,318.6 C545,321 555,322 567,322 C585,320 598,315 607.4,310.2" stroke="#e6e6e6"/>
<path d="M541,325 C552,335 558,345 560,356 C561,370 555,380 553,392 C552,405 556,415 565,422 C580,432 600,440 638,446"/>
<path d="M548.5,328.5 C556,338 562,348 562.3,356 C562,370 556,378 555.4,384 C554,398 556,405 558.8,411.5 C570,425 585,432 597,435.8 C610,440 625,443 638.5,444.4"/>
<path d="M670,250 C660,270 652,285 648,300 C644,315 643,330 648,345 C652,355 657,362 665,370"/>
<path d="M674,252 C664,272 656,288 652.3,297 C648,310 645,320 645.4,325 C645,335 648,345 652.3,352.7"/>
<path d="M518.5,460.8 C519,456 520,453 523,451.5 C527,449 530,448 533.8,447 C540,445 543,444.5 546,443.8 C550,442.5 553,441.5 555.4,440.8 C559,444 560,448 560,453"/>
<path d="M520,463.8 C523,467 527,469 532.3,470 C538,471 545,470.5 550.8,469.2 C557,467 562,464 566,460.8 C571,456 575,452 577,448.5 C578,446 578.5,443 578.5,440.8"/>
<path d="M623.8,439.8 C621,450 617,458 617,466.4 C617,474 618,480 621.5,484 C626,488 632,489 639,488.5 C648,487 655,485 659,481.9 C664,476 666,470 665.8,462 C665,452 664,443 661.4,435.4 C659,428 656,424 653.6,420"/>

<path d="M675,440 C690,437 705,434 720,430 C735,425 748,421 760,421.5 C768,428 772,434 777.3,437 C785,445 792,450 798,450 C806,452 812,452.7 824,445.7 C828,440 828,436 826.6,431.9 C822,424 817,419.8 812,416"/>
<path d="M760,360 C761,375 762,388 762,395.6 C775,400 785,405 794.6,407.7 C805,411 812,415 817,419.8"/>
<path d="M735,437 C730,448 722,458 710,462"/>
<path d="M714,287 C708,275 709,262 722,260 C738,259 751,270 757,286" stroke="#dcdcdc"/>
<path d="M753,348 C759,360 761,372 758,385"/>
</g>
<!-- freckles -->
<g fill="none" stroke="#c8c8c8" stroke-width="1">
<circle cx="422" cy="241.5" r="5"/><circle cx="412.4" cy="252" r="3.5"/><circle cx="424.8" cy="258.5" r="3.5"/>
<circle cx="525.8" cy="248.7" r="5.5"/><circle cx="547.2" cy="247.8" r="3.3"/><circle cx="566.2" cy="252.2" r="5"/><circle cx="551.5" cy="262.3" r="5.5"/>
</g>
<!-- outlines -->
<g fill="none" stroke="#1f1f1f" stroke-linecap="round" stroke-linejoin="round">
<path stroke-width="4.5" d="M536,142.6 C548,132 570,121 595,119 C612,118 630,120 645,125.5 C665,133 685,150 697,170 C701,175 704,179 707,184"/>
<path stroke-width="5" d="M711,205 C711,218 708,230 703,240 C697,252 690,262 683,270 C675,283 667,300 662,313 C658,328 657,345 661,354 C663,359 665,362 668,364"/>
<path stroke-width="3.6" d="M397,190 C393,205 392,225 394,240 C397,258 410,271 427,280 C442,287 458,291 475,294"/>
<path stroke-width="4.4" d="M471,292 C490,297 505,302 518,312 C532,322 544,335 548,350 C551,365 544,378 539,388 C534,398 535,410 542,418 C547,423 552,426 557,428"/>
<path stroke-width="4" d="M444,211.5 C442,225 442,245 450,258 C456,268 463,275 470,280 C485,291 505,298 530,301.6 C555,304 575,303 588,302 C607,299 625,287 636,272 C643,262 646,254 647,245"/>
<path stroke-linecap="butt" stroke-width="5" d="M456,267 C460,272 465,277 470,280 C485,291 505,298 530,301.6 C555,304 575,303 588,302 C607,299 625,287 636,272"/>
<path stroke-linecap="butt" stroke-width="5.8" d="M485,291 C500,296 515,299.5 530,301.6 C555,304 575,303 588,302 C603,299.6 615,293 624,285"/>
<!-- tail -->
<path stroke-width="5" d="M721.5,331 C723,318 722,305 717,294 C712,283 705,272 705,264 C706,257 715,253 727,253 C740,254 753,264 759,276 C764,288 766,305 765,320 C764,330 759,338 751,345"/>
<path stroke-linecap="butt" stroke-width="6" d="M727,253 C740,254 753,264 759,276 C764,288 766,305 765,320"/>
<!-- back line + hind leg -->
<path stroke-width="5.2" d="M659,340 C675,335 695,331 715,330.8 C730,332 743,338 752,346 C759,352 763,360 765,370 C766.5,377 768,383 771,388"/>
<path stroke-width="4.8" d="M771,388 C780,392 795,398 812,406 C825,413 834,423 836.5,436"/>
<path stroke-width="6.5" d="M836.5,436 C838,446 832,455 817,458 C805,460 794,457 784,450 C775,443 768,436 762,431"/>
<path stroke-width="3.5" d="M762,431 C757,427 752,424 748,425 C738,430 725,437 712,442 C702,446 694,448 683,452"/>
<path stroke-width="5" d="M739.5,430 C739,440 735,450 728,457 C720,465 712,468 705,467 C698,465 695,460 696,452"/>
<!-- body bottom / legs -->
<path stroke-width="3" d="M541,410 C545,418 550,424 557,427 C568,434 585,442 600,446 C608,448 615,451 618,452"/>
<path stroke-width="3.5" d="M554.6,426 C548,431 540,437 531,441 C522,445 514,449 511,457"/>
<path stroke-linecap="butt" stroke-width="6" d="M514,450 C509,457 509,470 520,476 C530,480 542,478 551,475 C560,471 566,467 570,462"/>
<path stroke-width="4" d="M570,462 C576,456 582,449 586,443"/>
<path stroke-width="4" stroke-linecap="butt" d="M620,425 C625,432 626,445 620,455 C614,466 609,476 611,487"/>
<path stroke-linecap="butt" stroke-width="6" d="M611,484 C612,497 622,504 633,504 C645,504 658,498 665,490 C669,483 670,477 670,470"/>
<path stroke-width="4.2" stroke-linecap="butt" d="M670,472 C671,460 670,448 667,438 C664,428 659,420 654,415"/>
<path stroke-width="3" d="M671,453 C680,451 690,449 700,446"/>
</g>
<path d="M634,243 C640,239 650,238 656,244 C659,247 661,250 662,254 C657,250 652,246 648,245 C643,244 638,244 634,243 Z" fill="#1f1f1f" stroke="#1f1f1f" stroke-width="1.5"/>
<!-- top ear (over head) -->
<path d="M597,118 C591,98 570,86 545,75 C525,66 516,57 519.5,46 C523,34 540,28 560,28 C585,29 607,45 617,68 C624,88 624,105 623,120 Z" fill="#b9652f"/>
<path d="M521,51 C537,47 556,46 574,50 C592,58 600,85 600,118 L597,118 C591,98 570,86 545,75 C530,68 522,60 521,51 Z" fill="#8f4f35"/>
<path fill="none" stroke="#1f1f1f" stroke-width="5.5" stroke-linecap="round" d="M597,117 C591,98 570,86 545,75 C525,66 516,57 519.5,46 C523,34 540,28 560,28 C585,29 607,45 617,68 C624,88 624,105 623,118"/>
<!-- right ear (over head) -->
<path d="M690,190 C703,182 717,176 740,168.5 C765,162 790,162 810,172 C830,183 841,195 842.5,208 C843,222 836,233 816,237.5 C800,238 790,233 780,225 C768,215 755,205 740,200 C725,196 712,200 701,205 Z" fill="#b9652f"/>
<path d="M701,205 C712,195 725,188 745,182 C770,175 795,178 808,190 C820,202 825,215 825,230 C815,236 800,236 788,230 C770,220 755,205 740,200 C725,196 712,200 701,205 Z" fill="#8f4f35"/>
<path fill="none" stroke="#1f1f1f" stroke-width="5.3" stroke-linecap="round" d="M690,190 C703,182 717,176 740,168.5 C765,162 790,162 810,172 C830,183 841,195 842.5,208 C843,222 836,233 816,237.5 C800,238 790,233 780,225 C768,215 755,205 740,200 C725,196 712,200 701,205"/>
</svg>
</div>
<div class="abs" style="left:342px;top:0;width:8px;height:3px;background:#292929"></div>
<div class="abs" style="left:343px;top:3px;width:1px;height:517px;background:#e6e6e6"></div>
</body></html>
